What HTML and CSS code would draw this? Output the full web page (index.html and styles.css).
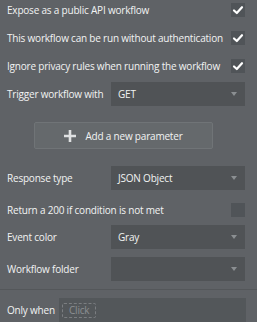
FILE: index.html
```html
<!DOCTYPE html>
<html lang="en">
<head>
  <meta charset="UTF-8" />
  <title>Workflow settings</title>
  <link rel="stylesheet" href="styles.css">
</head>
<body>
  <div class="panel">
    <div class="check-row">
      <span class="label">Expose as a public API workflow</span>
      <span class="checkbox checked">
        <svg viewBox="0 0 14 14" width="14" height="14"><path d="M3 7.5 L5.8 10 L11 4.2" /></svg>
      </span>
    </div>
    <div class="check-row">
      <span class="label">This workflow can be run without authentication</span>
      <span class="checkbox checked">
        <svg viewBox="0 0 14 14" width="14" height="14"><path d="M3 7.5 L5.8 10 L11 4.2" /></svg>
      </span>
    </div>
    <div class="check-row">
      <span class="label">Ignore privacy rules when running the workflow</span>
      <span class="checkbox checked">
        <svg viewBox="0 0 14 14" width="14" height="14"><path d="M3 7.5 L5.8 10 L11 4.2" /></svg>
      </span>
    </div>

    <div class="field-row trigger">
      <span class="label">Trigger workflow with</span>
      <div class="dropdown"><span>GET</span><i class="caret"></i></div>
    </div>

    <button class="add-btn">
      <svg viewBox="0 0 12 12" width="12" height="12"><path d="M6 0 V12 M0 6 H12" /></svg>
      Add a new parameter
    </button>

    <div class="field-row response">
      <span class="label">Response type</span>
      <div class="dropdown"><span>JSON Object</span><i class="caret"></i></div>
    </div>

    <div class="check-row return">
      <span class="label">Return a 200 if condition is not met</span>
      <span class="checkbox"></span>
    </div>

    <div class="field-row color">
      <span class="label">Event color</span>
      <div class="dropdown"><span>Gray</span><i class="caret"></i></div>
    </div>

    <div class="field-row folder">
      <span class="label">Workflow folder</span>
      <div class="dropdown"><span></span><i class="caret"></i></div>
    </div>
  </div>

  <div class="condition">
    <span class="label">Only when</span>
    <div class="expr"><span class="click">Click</span></div>
  </div>
</body>
</html>
```

FILE: styles.css
```css
body {
  margin: 0;
  background: #5f6266;
  color: #f2f3f3;
  font-family: "Open Sans", Arial, sans-serif;
  font-size: 10px;
  letter-spacing: -0.2px;
  overflow: hidden;
}
.panel {
  padding: 0 12px 0 7px;
  border-bottom: 1px solid #54575a;
  padding-bottom: 8px;
}
.label {
  white-space: nowrap;
}
.check-row {
  display: flex;
  align-items: center;
  justify-content: space-between;
  height: 20px;
  margin-bottom: 8px;
}
.check-row.return {
  margin-top: 10px;
  margin-bottom: 5px;
}
.checkbox {
  width: 14px;
  height: 14px;
  background: #505458;
  display: flex;
}
.checkbox svg path {
  fill: none;
  stroke: #ffffff;
  stroke-width: 2.2;
  stroke-linecap: round;
  stroke-linejoin: round;
}
.field-row {
  display: flex;
  align-items: center;
}
.field-row .label {
  width: 104px;
}
.field-row.trigger {
  margin-top: -2px;
}
.field-row.folder {
  margin-top: 8px;
}
.dropdown {
  width: 134px;
  height: 24px;
  background: #505356;
  display: flex;
  align-items: center;
  justify-content: space-between;
  padding: 0 8px 0 7px;
  box-sizing: border-box;
}
.caret {
  width: 0;
  height: 0;
  border-left: 3.5px solid transparent;
  border-right: 3.5px solid transparent;
  border-top: 4px solid #8b8f92;
}
.add-btn {
  display: flex;
  align-items: center;
  justify-content: center;
  gap: 9px;
  width: 179px;
  height: 27px;
  margin: 16px 0 17px 27px;
  background: #65696c;
  border: 1px solid #707477;
  border-radius: 2px;
  color: #f2f3f3;
  font-family: inherit;
  font-size: 10px;
  letter-spacing: inherit;
  padding: 0;
}
.add-btn svg path {
  stroke: #dfe1e2;
  stroke-width: 2.6;
}
.condition {
  display: flex;
  align-items: flex-start;
  padding: 8px 11px 0 7px;
}
.condition .label {
  width: 52px;
  margin-top: 5px;
}
.expr {
  flex: 1;
  height: 30px;
  background: #53575a;
  padding: 5px 3px;
  box-sizing: border-box;
}
.click {
  display: inline-block;
  border: 1px dashed #7b7e81;
  border-radius: 2px;
  color: #8c8f92;
  padding: 0 6px;
  height: 13px;
  line-height: 13px;
}
```
